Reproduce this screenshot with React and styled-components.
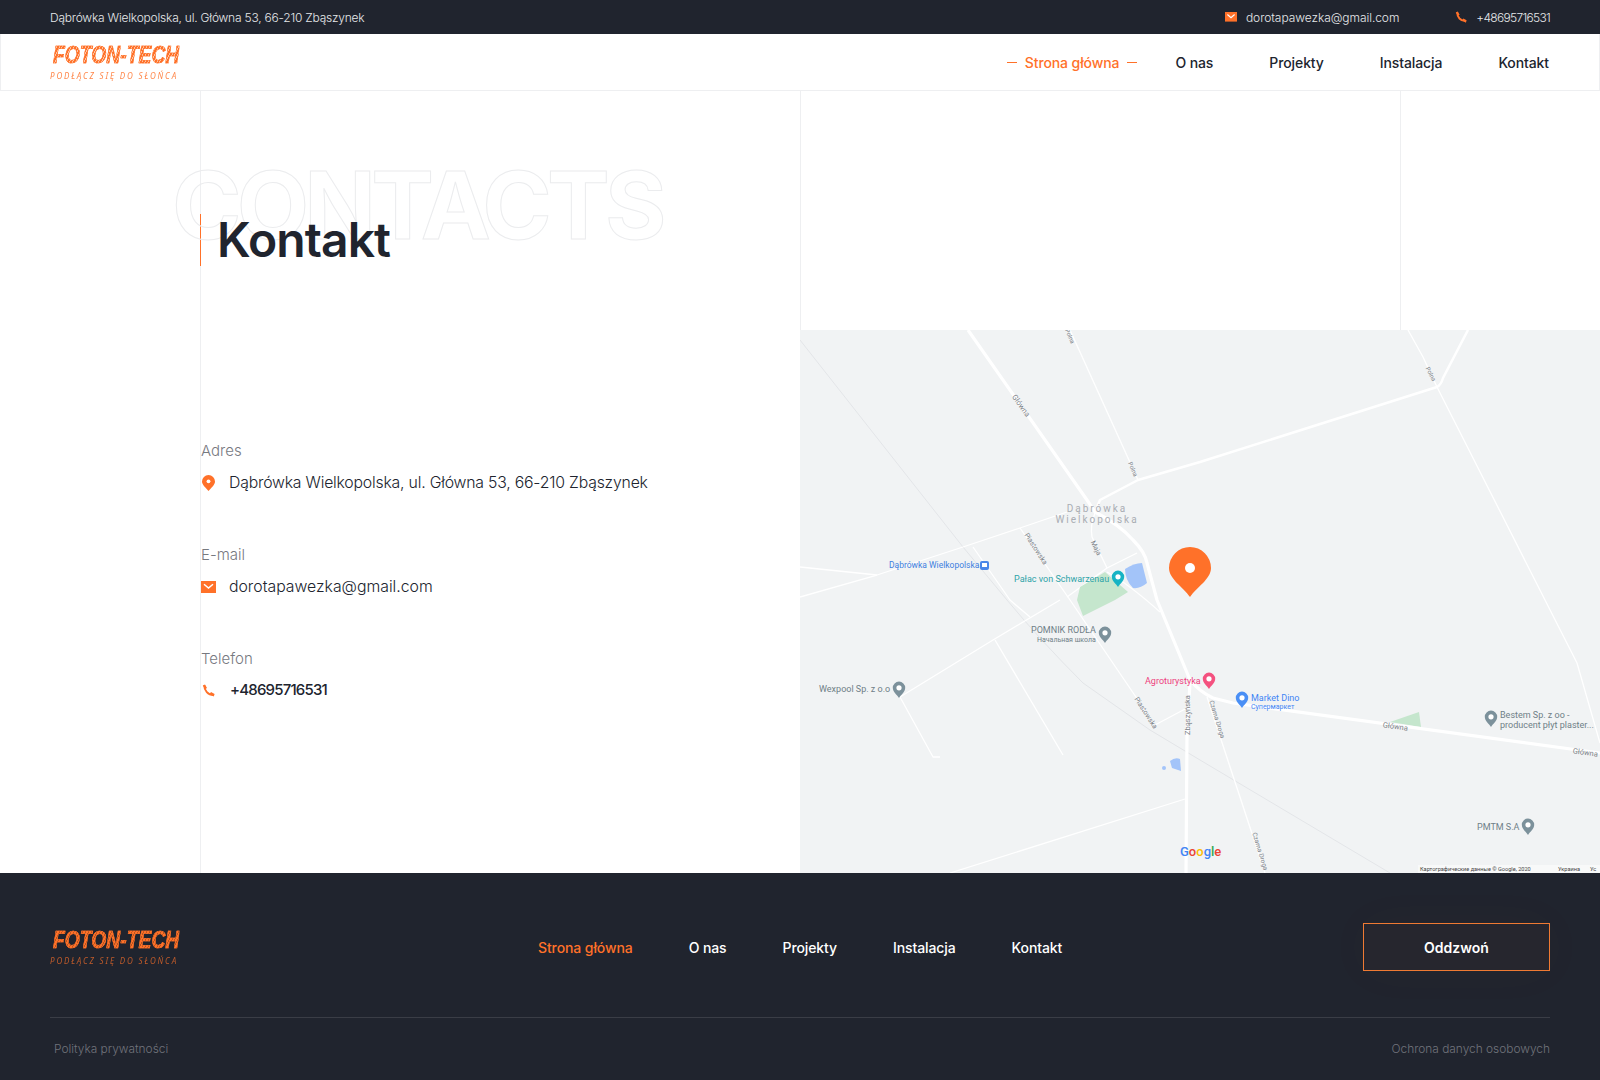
import styled, { createGlobalStyle } from 'styled-components';

const ORANGE = '#ff7129';
const DARK = '#20242e';

const GlobalStyle = createGlobalStyle`
  * { box-sizing: border-box; }
  body {
    margin: 0;
    background: #fff;
    font-family: 'Inter', 'Noto Sans', sans-serif;
    color: ${DARK};
  }
`;

/* TOP BAR */
const TopBar = styled.div`
  height: 34px;
  background: ${DARK};
  color: #e6e8ea;
  font-size: 12px;
  font-weight: 300;
  padding: 0 50px;
  display: flex;
  align-items: center;
  justify-content: space-between;
`;

const TopAddress = styled.span`
  letter-spacing: -0.22px;
`;

const TopContacts = styled.div`
  display: flex;
  gap: 56px;
`;

const TopItem = styled.span`
  display: flex;
  align-items: center;
  gap: 9px;
  letter-spacing: ${(p) => p.$spacing || '0'};
`;

/* HEADER */
const Header = styled.header`
  height: 57px;
  border: 1px solid #eeeff1;
  border-top: 0;
  padding: 0 50px 0 49px;
  display: flex;
  align-items: center;
  justify-content: space-between;
`;

const LogoBox = styled.div`
  display: flex;
  flex-direction: column;
  align-items: flex-start;
  width: 135px;
  margin-top: ${(p) => (p.$footer ? '-1px' : '0')};
`;

const LogoMark = styled.div`
  font-family: 'Liberation Sans', sans-serif;
  font-weight: 700;
  font-style: italic;
  font-size: 23px;
  line-height: 24px;
  margin-left: 3px;
  white-space: nowrap;
  transform: scaleX(0.84);
  transform-origin: left center;
  color: transparent;
  -webkit-text-stroke: 0.5px ${ORANGE};
  background: repeating-linear-gradient(
    120deg,
    ${ORANGE} 0 2px,
    ${(p) => (p.$footer ? '#b9561f' : '#ffc29f')} 2px 3px
  );
  background-clip: text;
  -webkit-background-clip: text;
`;

const LogoTag = styled.div`
  font-family: 'Noto Sans', sans-serif;
  font-style: italic;
  font-size: 8px;
  line-height: 10px;
  margin-top: 4px;
  letter-spacing: 1.85px;
  white-space: nowrap;
  color: ${ORANGE};
  opacity: ${(p) => (p.$footer ? 0.7 : 0.85)};
`;

const Nav = styled.nav`
  display: flex;
  align-items: center;
  gap: 56px;
`;

const NavLink = styled.a`
  display: flex;
  align-items: center;
  gap: 8px;
  font-size: 14px;
  font-weight: 500;
  letter-spacing: -0.1px;
  margin-right: ${(p) => (p.$dashed ? '-18px' : '0')};
  color: ${(p) => (p.$active ? ORANGE : p.$light ? '#fff' : DARK)};
`;

const Dash = styled.i`
  width: 10px;
  height: 1px;
  background: ${ORANGE};
`;

/* MAIN */
const Main = styled.main`
  display: grid;
  grid-template-columns: 800px 800px;
  height: 782px;
`;

const LeftCol = styled.section`
  margin-left: 200px;
  border-left: 1px solid #eeeff1;
  padding-top: 123px;
`;

const TitleWrap = styled.div`
  position: relative;
  margin-left: -1px;
  height: 52px;
  border-left: 1px solid ${ORANGE};
  padding-left: 16px;
  display: flex;
  align-items: center;
`;

const GhostTitle = styled.div`
  position: absolute;
  left: -29px;
  top: -69px;
  font-size: 94px;
  line-height: 120px;
  font-weight: 700;
  letter-spacing: -4.8px;
  color: transparent;
  -webkit-text-stroke: 1px #ebecee;
  white-space: nowrap;
`;

const Title = styled.h1`
  position: relative;
  margin: 0;
  font-size: 48px;
  line-height: 52px;
  font-weight: 600;
  letter-spacing: -0.9px;
`;

const InfoList = styled.div`
  margin-top: 175px;
  display: flex;
  flex-direction: column;
  gap: 51px;
`;

const InfoBlock = styled.div`
  display: flex;
  flex-direction: column;
  gap: 11px;
`;

const InfoLabel = styled.div`
  font-size: 15px;
  line-height: 20px;
  font-weight: 300;
  color: #77797f;
`;

const InfoRow = styled.div`
  display: flex;
  align-items: center;
  gap: 13px;
  font-size: 15.8px;
  line-height: 22px;
  font-weight: 300;
  letter-spacing: ${(p) => p.$spacing || '0'};
`;

const PhoneRow = styled(InfoRow)`
  font-size: 15px;
  line-height: 20px;
  font-weight: 500;
  gap: 14px;
  letter-spacing: -0.8px;
`;

const IconSlot = styled.span`
  width: 15px;
  display: flex;
  justify-content: center;
`;

const RightCol = styled.section`
  display: flex;
  flex-direction: column;
`;

const Blank = styled.div`
  height: 239px;
  border-left: 1px solid #eeeff1;
`;

const BlankLine = styled.div`
  width: 600px;
  height: 100%;
  border-right: 1px solid #eeeff1;
`;

const MapBox = styled.div`
  height: 543px;
  background: #f1f3f4;
`;

const MapSvg = styled.svg`
  display: block;
  width: 800px;
  height: 543px;
  font-family: 'Roboto', sans-serif;
`;

/* FOOTER */
const Footer = styled.footer`
  height: 207px;
  background: ${DARK};
  padding: 50px 50px 0;
`;

const FooterTop = styled.div`
  display: grid;
  grid-template-columns: 488px 1fr auto;
  align-items: center;
  height: 48px;
`;

const CallButton = styled.button`
  width: 187px;
  height: 48px;
  background: #26262e;
  border: 1px solid #ef7a33;
  color: #fff;
  font-family: inherit;
  font-size: 14px;
  font-weight: 600;
  box-shadow: 0 0 50px rgba(255, 113, 41, 0.03);
`;

const FooterLine = styled.div`
  margin-top: 46px;
  height: 1px;
  background: #3a3d46;
`;

const FooterBottom = styled.div`
  display: flex;
  justify-content: space-between;
  padding: 22px 0 0 4px;
  font-size: 11.9px;
  font-weight: 300;
  line-height: 18px;
  color: #70737b;
`;

const navItems = ['O nas', 'Projekty', 'Instalacja', 'Kontakt'];

const MailIcon = ({ size = 15 }) => (
  <svg width={size} height={size * 0.8} viewBox="0 0 15 12">
    <rect width="15" height="12" fill={ORANGE} />
    <path d="M3 3.2 L7.5 7 L12 3.2" fill="none" stroke="#fff" strokeWidth="1.5" />
  </svg>
);

const PhoneIcon = ({ size = 13 }) => (
  <svg width={size} height={size} viewBox="0 0 13 13">
    <path d="M2.4 1.5 C2.2 6.5 6 11 11.5 11" fill="none" stroke={ORANGE} strokeWidth="2" />
    <path d="M0.8 1.6 L3 0.6 L5 4 L3 5.2 Z M7.6 10 L9 8 L12.6 10 L11.8 12.6 Z" fill={ORANGE} />
  </svg>
);

const PinIcon = () => (
  <svg width="13" height="16" viewBox="0 0 13 16">
    <path d="M6.5 0 A6.5 6.5 0 0 1 13 6.5 C13 9.6 9.5 12.6 6.5 16 C3.5 12.6 0 9.6 0 6.5 A6.5 6.5 0 0 1 6.5 0 Z" fill={ORANGE} />
    <circle cx="6.5" cy="6.3" r="1.9" fill="#fff" />
  </svg>
);

const Logo = ({ footer }) => (
  <LogoBox $footer={footer}>
    <LogoMark $footer={footer}>FOTON-TECH</LogoMark>
    <LogoTag $footer={footer}>PODŁĄCZ SIĘ DO SŁOŃCA</LogoTag>
  </LogoBox>
);

// small marker used for every place on the map
const Poi = ({ x, y, color, s = 1 }) => (
  <g transform={`translate(${x} ${y}) scale(${s})`}>
    <path d="M0 8 C-2 4.8 -6.2 2 -6.2 -2.2 A6.2 6.2 0 0 1 6.2 -2.2 C6.2 2 2 4.8 0 8 Z" fill={color} />
    <circle cx="0" cy="-2.2" r="2.6" fill="#fff" />
  </g>
);

const RoadLabel = ({ x, y, rot, children, size = 7.5 }) => (
  <text x={x} y={y} fontSize={size} fill="#7b8187" textAnchor="middle" transform={`rotate(${rot} ${x} ${y})`}>
    {children}
  </text>
);

const MapDrawing = () => (
  <MapSvg viewBox="800 330 800 543">
    {/* rail line */}
    <g fill="none" stroke="#e3e5e8" strokeWidth="1">
      <path d="M800 340 L963 547 L1007 600 Q1040 640 1083 683 L1150 730 L1200 760 L1390 873" />
    </g>
    {/* thin roads */}
    <g fill="none" stroke="#fff" strokeWidth="1.3" strokeLinejoin="round">
      <path d="M1070 330 L1138 480" />
      <path d="M1408 330 L1423 357 L1437 387 L1545 600 L1577 663 L1600 743" />
      <path d="M800 597 L877 575 L963 547 L1020 528 L1067 512" />
      <path d="M800 567 L877 575" />
      <path d="M973 547 L1010 600 L1030 617" />
      <path d="M1020 528 L1070 600 L1155 725 L1187 708" />
      <path d="M1095 513 Q1090 525 1092 537 L1107 568" />
      <path d="M1060 600 L993 640 L900 697 L933 757 L940 757" />
      <path d="M995 640 L1063 755" />
      <path d="M950 873 L1185 799" />
      <path d="M1207 697 L1265 873" />
      <path d="M1067 597 L1107 568 L1137 553" />
      <path d="M1107 572 Q1130 585 1160 612" />
    </g>
    {/* green and water */}
    <polygon points="1080,587 1105,572 1128,592 1115,600 1083,616 1077,600" fill="#c5e6cd" />
    <polygon points="1390,722 1419,712 1421,727" fill="#c5e6cd" />
    <path d="M1125 569 Q1134 563 1142 563 L1147 583 Q1140 589 1133 588 Q1125 580 1125 569 Z" fill="#a3c4f9" />
    <path d="M1170 761 Q1175 757 1180 759 L1181 771 L1172 768 Z" fill="#a3c4f9" />
    <circle cx="1164" cy="768" r="2" fill="#a3c4f9" />
    {/* main roads */}
    <g fill="none" stroke="#fff" strokeWidth="3.2" strokeLinejoin="round">
      <path d="M968 330 L1087 500 L1095 512 Q1120 525 1133 540 Q1145 552 1147 563 L1157 600 L1190 680 Q1200 692 1213 698 L1233 703 L1600 753" />
      <path d="M1190 683 L1187 733 L1186 873" />
      <path d="M1095 512 L1100 500 L1138 480 L1200 462 L1437 387 Q1441 385 1443 378 L1468 330" strokeWidth="2.5" />
    </g>
    {/* road names */}
    <RoadLabel x={1019} y={407} rot={55}>Główna</RoadLabel>
    <RoadLabel x={1068} y={337} rot={66} size={6}>Polna</RoadLabel>
    <RoadLabel x={1131} y={470} rot={66} size={6}>Polna</RoadLabel>
    <RoadLabel x={1429} y={375} rot={62} size={6}>Polna</RoadLabel>
    <RoadLabel x={1034} y={550} rot={57} size={7}>Piastowska</RoadLabel>
    <RoadLabel x={1144} y={714} rot={57} size={7}>Piastowska</RoadLabel>
    <RoadLabel x={1094} y={549} rot={62} size={7}>Maja</RoadLabel>
    <RoadLabel x={1190} y={715} rot={-90}>Zbąszyńska</RoadLabel>
    <RoadLabel x={1215} y={720} rot={73} size={6.5}>Czarna Droga</RoadLabel>
    <RoadLabel x={1258} y={852} rot={73} size={6.5}>Czarna Droga</RoadLabel>
    <RoadLabel x={1395} y={729} rot={8}>Główna</RoadLabel>
    <RoadLabel x={1585} y={755} rot={8}>Główna</RoadLabel>
    {/* town name */}
    <g fontSize="10" fill="#a9adb3" letterSpacing="2" textAnchor="middle">
      <text x="1097" y="512">Dąbrówka</text>
      <text x="1097" y="523">Wielkopolska</text>
    </g>
    {/* places */}
    <text x="889" y="568" fontSize="8.5" fill="#3f7fe0">Dąbrówka Wielkopolska</text>
    <rect x="980" y="561" width="9" height="9" rx="2" fill="#4a86e8" />
    <rect x="982" y="563" width="5" height="4" fill="#fff" />
    <text x="1014" y="582" fontSize="9" fill="#2fa3a8">Pałac von Schwarzenau</text>
    <Poi x={1118} y={579} color="#16b3c4" />
    <text x="1031" y="633" fontSize="9" fill="#6f8087">POMNIK RODŁA</text>
    <text x="1037" y="642" fontSize="7" fill="#6f8087">Начальная школа</text>
    <Poi x={1105} y={635} color="#7c919b" />
    <text x="819" y="692" fontSize="9" fill="#6f8087">Wexpool Sp. z o.o</text>
    <Poi x={899} y={690} color="#7c919b" />
    <text x="1145" y="684" fontSize="9" fill="#ee3f7d">Agroturystyka</text>
    <Poi x={1209} y={681} color="#f4517f" />
    <text x="1251" y="701" fontSize="9" fill="#3f85f4">Market Dino</text>
    <text x="1251" y="709" fontSize="7" fill="#3f85f4">Супермаркет</text>
    <Poi x={1242} y={700} color="#4a8ff5" />
    <text x="1500" y="718" fontSize="9" fill="#6f8087">Bestem Sp. z oo -</text>
    <text x="1500" y="728" fontSize="9" fill="#6f8087">producent płyt plaster...</text>
    <Poi x={1491} y={719} color="#7c919b" />
    <text x="1477" y="830" fontSize="9" fill="#6f8087">PMTM S.A</text>
    <Poi x={1528} y={827} color="#7c919b" />
    {/* main pin */}
    <path d="M1190 597 C1183 587 1169 579 1169 568 A21 21 0 0 1 1211 568 C1211 579 1197 587 1190 597 Z" fill={ORANGE} />
    <circle cx="1190" cy="568" r="5" fill="#fff" />
    {/* google */}
    <text x="1180" y="856" fontSize="13" fontWeight="500">
      <tspan fill="#4285f4">G</tspan>
      <tspan fill="#ea4335">o</tspan>
      <tspan fill="#fbbc05">o</tspan>
      <tspan fill="#4285f4">g</tspan>
      <tspan fill="#34a853">l</tspan>
      <tspan fill="#ea4335">e</tspan>
    </text>
    <rect x="1418" y="865" width="182" height="8" fill="#f8f9f9" />
    <g fontSize="5.6" fill="#444">
      <text x="1420" y="871">Картографические данные © Google, 2020</text>
      <text x="1558" y="871">Украина</text>
      <text x="1590" y="871">Ус</text>
    </g>
  </MapSvg>
);

export default function App() {
  return (
    <>
      <GlobalStyle />
      <TopBar>
        <TopAddress>Dąbrówka Wielkopolska, ul. Główna 53, 66-210 Zbąszynek</TopAddress>
        <TopContacts>
          <TopItem $spacing="-0.06px">
            <MailIcon size={12} />
            dorotapawezka@gmail.com
          </TopItem>
          <TopItem $spacing="-0.7px">
            <PhoneIcon size={12} />
            +48695716531
          </TopItem>
        </TopContacts>
      </TopBar>
      <Header>
        <Logo />
        <Nav>
          <NavLink $active $dashed>
            <Dash />
            Strona główna
            <Dash />
          </NavLink>
          {navItems.map((item) => (
            <NavLink key={item}>{item}</NavLink>
          ))}
        </Nav>
      </Header>
      <Main>
        <LeftCol>
          <TitleWrap>
            <GhostTitle>CONTACTS</GhostTitle>
            <Title>Kontakt</Title>
          </TitleWrap>
          <InfoList>
            <InfoBlock>
              <InfoLabel>Adres</InfoLabel>
              <InfoRow $spacing="-0.2px">
                <IconSlot><PinIcon /></IconSlot>
                Dąbrówka Wielkopolska, ul. Główna 53, 66-210 Zbąszynek
              </InfoRow>
            </InfoBlock>
            <InfoBlock>
              <InfoLabel>E-mail</InfoLabel>
              <InfoRow>
                <IconSlot><MailIcon /></IconSlot>
                dorotapawezka@gmail.com
              </InfoRow>
            </InfoBlock>
            <InfoBlock>
              <InfoLabel>Telefon</InfoLabel>
              <PhoneRow>
                <IconSlot><PhoneIcon /></IconSlot>
                +48695716531
              </PhoneRow>
            </InfoBlock>
          </InfoList>
        </LeftCol>
        <RightCol>
          <Blank>
            <BlankLine />
          </Blank>
          <MapBox>
            <MapDrawing />
          </MapBox>
        </RightCol>
      </Main>
      <Footer>
        <FooterTop>
          <Logo footer />
          <Nav>
            <NavLink $active>Strona główna</NavLink>
            {navItems.map((item) => (
              <NavLink key={item} $light>{item}</NavLink>
            ))}
          </Nav>
          <CallButton>Oddzwoń</CallButton>
        </FooterTop>
        <FooterLine />
        <FooterBottom>
          <span>Polityka prywatności</span>
          <span>Ochrona danych osobowych</span>
        </FooterBottom>
      </Footer>
    </>
  );
}
